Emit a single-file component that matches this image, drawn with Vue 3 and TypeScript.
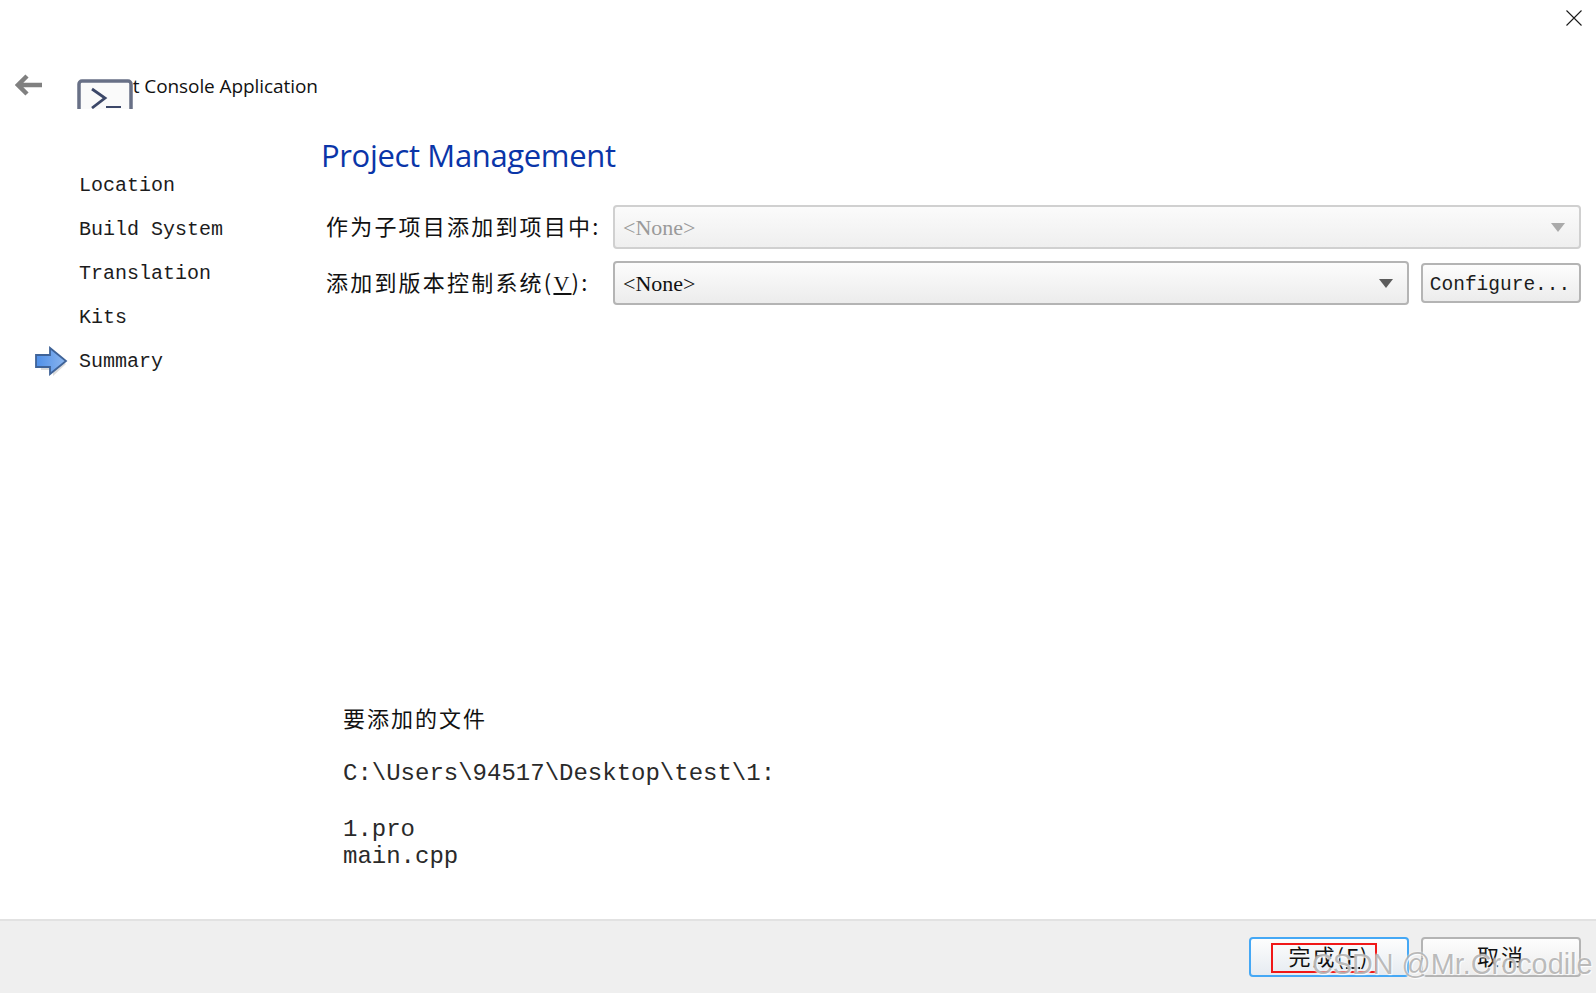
<script setup lang="ts">
const steps: string[] = ['Location', 'Build System', 'Translation', 'Kits', 'Summary']
const current = 'Summary'
</script>

<template>
  <div class="wizard">
    <div class="topbar">
      <svg class="close" width="16" height="16" viewBox="0 0 16 16">
        <path d="M.5.5l15 15M15.500 .5l-15 15" stroke="#1a1a1a" stroke-width="1.100" fill="none" />
      </svg>
    </div>
    <div class="header">
      <svg class="back" width="28" height="22" viewBox="0 0 28 22">
        <path d="M27 11H4M12 2l-9 9 9 9" stroke="#808080" stroke-width="4.500" fill="none" />
      </svg>
      <svg class="app-icon" width="56" height="30" viewBox="0 0 56 30">
        <path d="M2 30V5a3 3 0 0 1 3-3h46a3 3 0 0 1 3 3v25z" fill="#fafafa" />
        <path d="M2 30V5a3 3 0 0 1 3-3h46a3 3 0 0 1 3 3v25" stroke="#687086" stroke-width="3.500" fill="none" />
        <path d="M15 10l13 9-13 10" stroke="#3c4768" stroke-width="2.800" fill="none" />
        <path d="M29 28h15" stroke="#3c4768" stroke-width="2" fill="none" />
      </svg>
      <span class="app-title">Qt Console Application</span>
    </div>

    <div class="body">
      <nav class="steps">
        <div v-for="s in steps" :key="s" class="step">
          <svg v-if="s === current" class="marker" width="34" height="32" viewBox="0 0 34 32">
            <defs>
              <linearGradient id="arrowFill" x1="0" y1="0" x2="1" y2="0">
                <stop offset="0" stop-color="#4f8fe8" />
                <stop offset="1" stop-color="#8cb6ee" />
              </linearGradient>
            </defs>
            <path d="M3 11h13V5l13 11-13 12v-6H4z" fill="#000" opacity=".14" transform="translate(2 2)" />
            <path d="M1 9h14V2l16 13-16 13v-7H1z" fill="url(#arrowFill)" stroke="#3f6398" stroke-width="1.800" />
          </svg>
          <span>{{ s }}</span>
        </div>
      </nav>

      <main class="content">
        <h1 class="page-title">Project Management</h1>
        <div class="form-row first">
          <label class="cjk label">作为子项目添加到项目中:</label>
          <div class="combo disabled">
            <span class="combo-text">&lt;None&gt;</span>
            <i class="caret"></i>
          </div>
        </div>
        <div class="form-row">
          <label class="cjk label">添加到版本控制系统(<u class="mono-key">V</u>):</label>
          <div class="combo">
            <span class="combo-text">&lt;None&gt;</span>
            <i class="caret"></i>
          </div>
          <button class="btn configure"><span class="configure-text">Configure...</span></button>
        </div>

        <section class="files">
          <p class="cjk files-title">要添加的文件</p>
          <p class="path">C:\Users\94517\Desktop\test\1:</p>
          <p class="file-list">1.pro<br />main.cpp</p>
        </section>
      </main>
    </div>

    <footer class="footer">
      <button class="btn action primary cjk">
        <span class="highlight"></span>
        <span class="action-text">完成(<u>F</u>)</span>
      </button>
      <button class="btn action cjk"><span class="action-text">取消</span></button>
      <span class="watermark">CSDN @Mr.Crocodile</span>
    </footer>
  </div>
</template>

<style>
html, body { margin: 0; background: #fff; }
</style>

<style scoped>
.wizard {
  position: relative;
  display: flex;
  flex-direction: column;
  width: 1596px;
  height: 993px;
  overflow: hidden;
  background: #fff;
  color: #111;
}
.topbar {
  display: flex;
  justify-content: flex-end;
  height: 74px;
  padding: 10px 14px 0 0;
  box-sizing: border-box;
}
.header {
  display: flex;
  align-items: flex-start;
  height: 89px;
  padding-left: 15px;
}
.back { flex: none; }
.app-icon { flex: none; margin: 5px 0 0 34px; position: relative; z-index: 1; }
.app-title {
  margin-left: -15px;
  font: 19px/24px "Open Sans", sans-serif;
  letter-spacing: -0.08px;
  color: #111;
}
.body { display: flex; flex: 1; min-height: 0; }
.steps { flex: none; width: 321px; box-sizing: border-box; padding-left: 35px; }
.step {
  display: flex;
  align-items: center;
  height: 44px;
  padding-left: 44px;
  position: relative;
  font: 20px "Liberation Mono", monospace;
  color: #1c1c1c;
}
.marker { position: absolute; left: 0; top: 7px; }
.content { flex: 1; display: flex; flex-direction: column; padding-right: 15px; min-width: 0; }
.page-title {
  margin: -30px 0 0;
  font: 400 31px/44px "Open Sans", sans-serif;
  color: #0a35a8;
  letter-spacing: -0.35px;
}
.cjk { font-family: "Noto Sans CJK SC", sans-serif; }
.form-row { display: flex; align-items: center; height: 44px; margin-top: 12px; }
.form-row.first { margin-top: 28px; }
.label {
  flex: none;
  width: 292px;
  padding-left: 5px;
  padding-bottom: 5px;
  box-sizing: border-box;
  font-size: 22px;
  letter-spacing: 2.200px;
  white-space: nowrap;
  font-weight: 400;
}
.mono-key { font-family: "Liberation Serif", serif; }
.combo {
  flex: 1;
  height: 44px;
  box-sizing: border-box;
  display: flex;
  align-items: center;
  justify-content: space-between;
  padding: 0 14px 0 8px;
  border: 2px solid #b4b4b4;
  border-radius: 4px;
  background: linear-gradient(#fcfcfc, #ececec);
  font: 22px "Liberation Serif", serif;
}
.combo-text { position: relative; top: 1px; }
.combo.disabled { border-color: #d0d0d0; color: #9a9a9a; background: linear-gradient(#fbfbfb, #efefef); }
.caret {
  width: 0;
  height: 0;
  border-left: 7.500px solid transparent;
  border-right: 7.500px solid transparent;
  border-top: 9px solid #5c5c5c;
}
.disabled .caret { border-top-color: #aaa; }
.btn {
  box-sizing: border-box;
  border: 2px solid #b4b4b4;
  border-radius: 4px;
  background: linear-gradient(#fdfdfd, #ececec);
  color: #111;
  padding: 0;
}
.configure {
  flex: none;
  width: 160px;
  height: 40px;
  margin-left: 12px;
  font: 19.500px "Liberation Mono", monospace;
  color: #1c1c1c;
}
.configure-text { position: relative; top: 2px; left: -1px; }
.files { margin-top: auto; padding: 0 0 49px 22px; }
.files p { margin: 0; }
.files-title { font-size: 22px; line-height: 30px; letter-spacing: 2px; font-weight: 400; }
.path, .file-list { font: 24px/28px "Liberation Mono", monospace; color: #2a2a2a; }
.path { margin-top: 28px !important; }
.file-list { margin-top: 28px !important; line-height: 27px; }
.footer {
  position: relative;
  flex: none;
  height: 74px;
  box-sizing: border-box;
  display: flex;
  justify-content: flex-end;
  gap: 12px;
  padding: 16px 15px 0 0;
  background: #efefef;
  border-top: 2px solid #e2e2e2;
}
.action {
  position: relative;
  width: 160px;
  height: 40px;
  font-size: 22px;
  font-weight: 400;
  letter-spacing: 2px;
}
.action-text { position: relative; top: -2px; }
.primary { border-color: #45a8f5; background: linear-gradient(#fdfdfd, #e6ebf1); }
.highlight {
  position: absolute;
  left: 20px;
  top: 4px;
  width: 106px;
  height: 30px;
  box-sizing: border-box;
  border: 2px solid #f01818;
}
.watermark {
  position: absolute;
  left: 1312px;
  top: 27px;
  font: 28.800px "Liberation Sans", sans-serif;
  color: rgba(120, 120, 120, .5);
  text-shadow: 0 0 2px #fff, 1px 1px 1px rgba(255, 255, 255, .9);
  white-space: nowrap;
}
</style>
